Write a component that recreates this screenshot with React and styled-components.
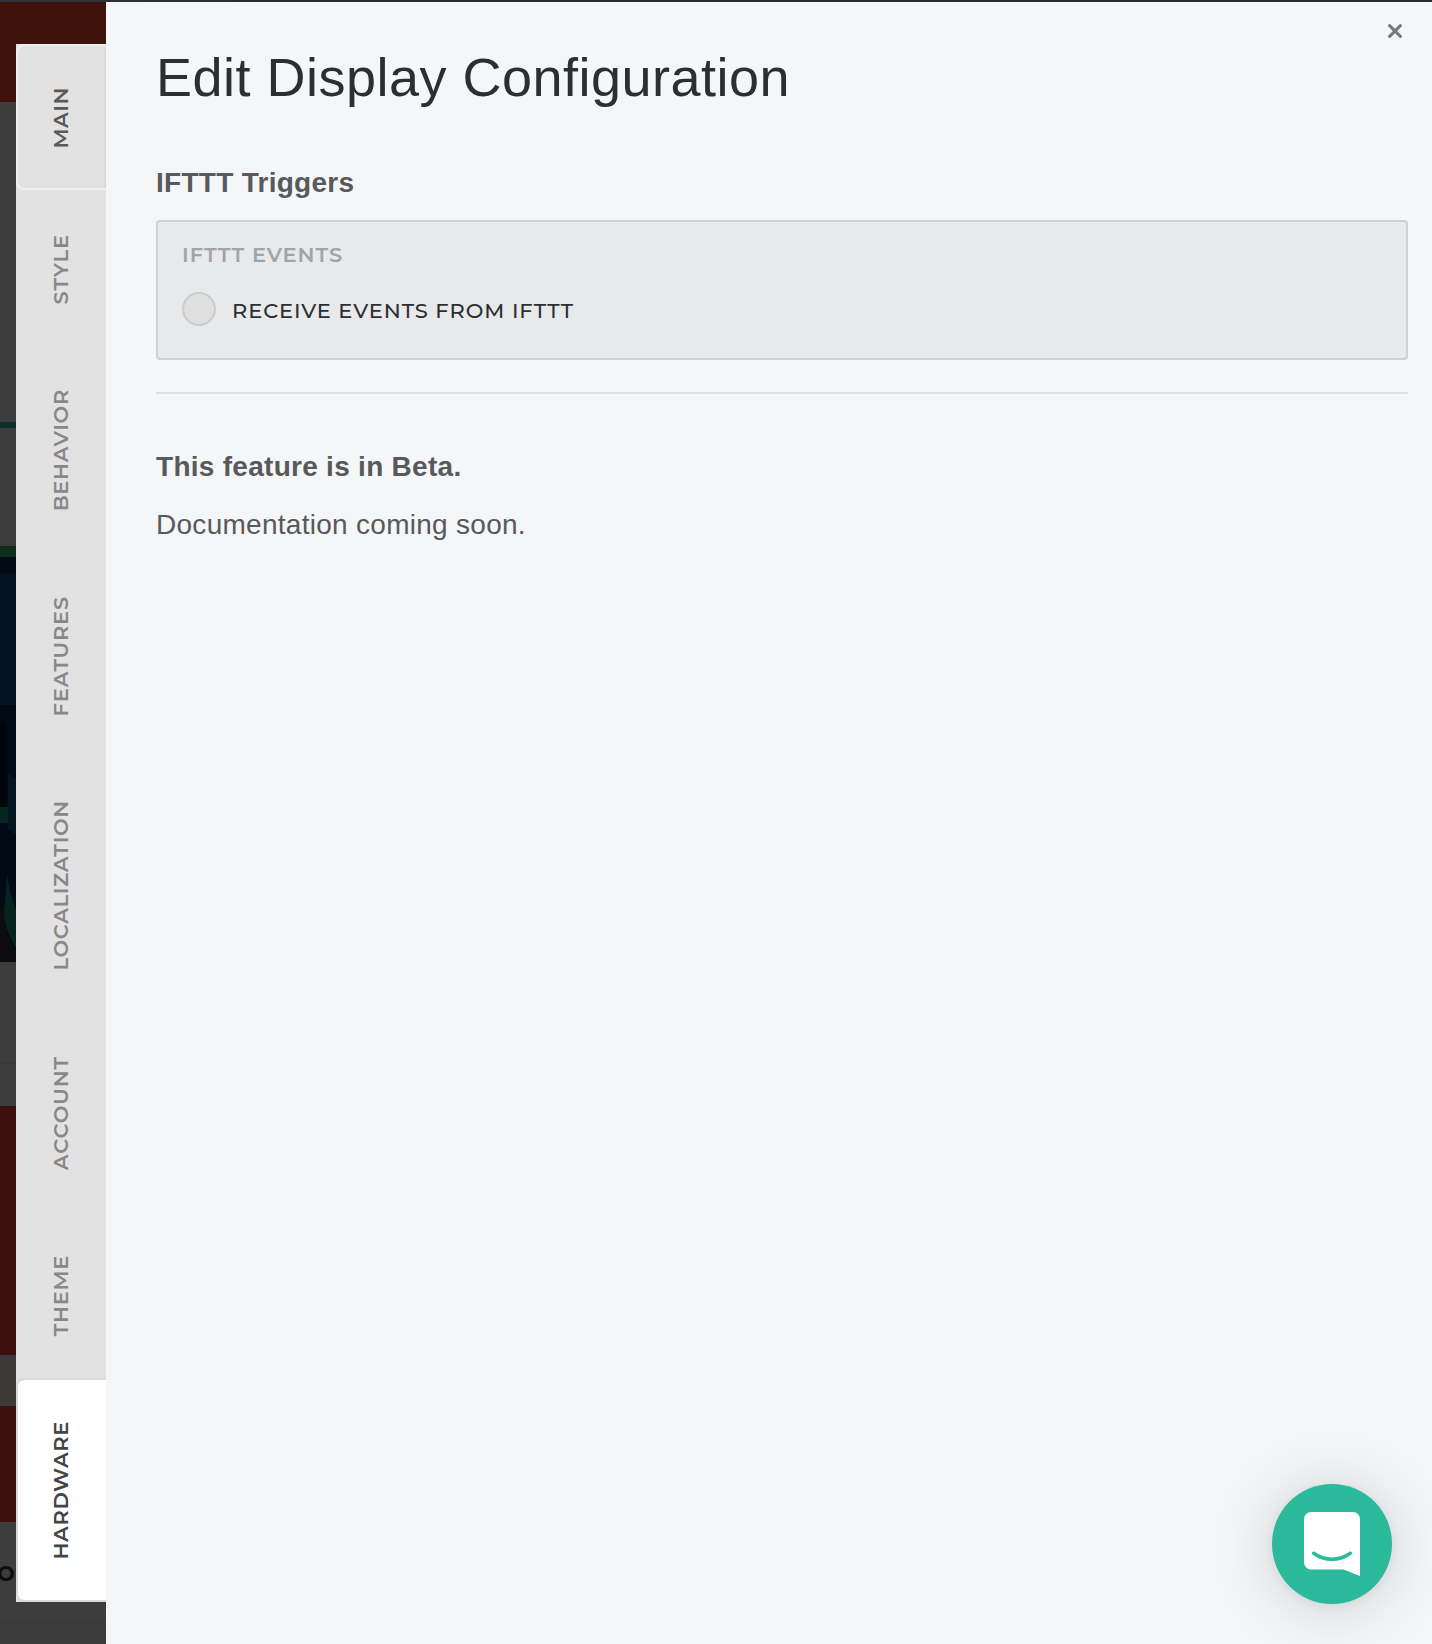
import React from 'react';
import styled, { createGlobalStyle } from 'styled-components';

const GlobalStyle = createGlobalStyle`
  *, *::before, *::after { box-sizing: border-box; }
  body { margin: 0; background: #3c3c3c; }
  h1, h2, p { margin: 0; }
  button { border: 0; padding: 0; background: none; cursor: pointer; }
`;

const body = '"Helvetica Neue", "Liberation Sans", Arial, sans-serif';
const caps = 'Montserrat, Lato, sans-serif';

const Screen = styled.div`
  position: relative;
  height: 1644px;
  overflow: hidden;
  font-family: ${body};
  color: #58595b;
`;

const Page = styled.div`
  display: flex;
  flex-direction: column;
  height: 100%;
`;

const Band = styled.div`
  flex: none;
  height: ${(p) => p.$h}px;
  background: ${(p) => p.$bg || '#3d3d3d'};
`;

const PageFooter = styled(Band)`
  padding-top: 39px;
  font: 700 21px/26px ${caps};
  color: #0e0e0e;
  text-indent: -3px;
`;

const Modal = styled.div`
  position: absolute;
  inset: 2px 0 0 16px;
  display: flex;
`;

const TabList = styled.nav`
  display: flex;
  flex-direction: column;
  align-self: flex-start;
  width: 90px;
  margin-top: 42px;
  background: #e2e2e2;
`;

const tones = {
  normal: { color: '#87888a', bg: 'transparent', line: 'transparent' },
  first: { color: '#58595b', bg: 'transparent', line: '#efefef' },
  active: { color: '#424447', bg: '#ffffff', line: '#dadada' },
};

const Tab = styled.button`
  display: flex;
  align-items: flex-end;
  justify-content: center;
  height: ${(p) => p.$h}px;
  padding: 0 3px 40px 0;
  border: 2px solid ${(p) => tones[p.$tone].line};
  border-right: 0;
  border-radius: 8px 0 0 8px;
  background: ${(p) => tones[p.$tone].bg};
  background-clip: padding-box;
  box-shadow: ${(p) => (p.$tone === 'first' ? 'inset -2px 0 2px -1px #d2d2d2' : 'none')};
  font: 600 21px/26px ${caps};
  letter-spacing: ${(p) => p.$track}px;
  color: ${(p) => tones[p.$tone].color};
`;

const TabLabel = styled.span`
  writing-mode: vertical-rl;
  transform: rotate(180deg);
  white-space: nowrap;
`;

const Panel = styled.main`
  flex: 1;
  display: flex;
  flex-direction: column;
  padding: 0 24px 0 50px;
  background: #f5f6f8;
`;

const CloseRow = styled.div`
  display: flex;
  justify-content: flex-end;
  height: 39px;
  padding: 22px 6px 0 0;
`;

const CloseButton = styled.button`
  width: 14px;
  height: 14px;
  line-height: 0;
`;

const Title = styled.h1`
  font-weight: 400;
  font-size: 54px;
  line-height: 72px;
  letter-spacing: 0.49px;
  color: #2d2e30;
`;

const SectionTitle = styled.h2`
  margin-top: ${(p) => p.$top}px;
  font-weight: 700;
  font-size: 28px;
  line-height: 40px;
  letter-spacing: 0.01em;
`;

const Text = styled.p`
  margin-top: 18px;
  font-size: 28px;
  line-height: 40px;
  letter-spacing: 0.01em;
`;

const Fieldset = styled.section`
  height: 140px;
  margin-top: 17px;
  padding: 20px 24px;
  border: 2px solid #cfd0d1;
  border-radius: 4px;
  background: #e8e9eb;
  font: 600 21px/26px ${caps};
  letter-spacing: 0.93px;
`;

const Legend = styled.div`
  color: #a2a3a5;
`;

const Option = styled.label`
  display: flex;
  align-items: center;
  height: 34px;
  margin-top: 24px;
  font-weight: 500;
  color: #2d2e30;
`;

const Radio = styled.span`
  width: 34px;
  height: 34px;
  margin-right: 16px;
  border: 2px solid #cbcccc;
  border-radius: 50%;
  background: #e0e0e0;
`;

const OptionText = styled.span`
  padding-top: 3px;
`;

const Divider = styled.hr`
  width: 100%;
  height: 2px;
  margin: 32px 0 0;
  border: 0;
  background: #dfe0e1;
`;

const ChatButton = styled.button`
  position: absolute;
  right: 40px;
  bottom: 40px;
  width: 120px;
  height: 120px;
  border-radius: 50%;
  background: #2bba9b;
  box-shadow: 0 2px 12px rgba(0, 0, 0, 0.06), 0 4px 64px rgba(0, 0, 0, 0.16);
  line-height: 0;
`;

const ArtworkSvg = styled.svg`
  display: block;
`;

const tabs = [
  { label: 'MAIN', h: 146, track: 0.5, tone: 'first' },
  { label: 'STYLE', h: 156, track: 0.95 },
  { label: 'BEHAVIOR', h: 207, track: 0.7 },
  { label: 'FEATURES', h: 205, track: 0.8 },
  { label: 'LOCALIZATION', h: 255, track: 0.65 },
  { label: 'ACCOUNT', h: 199, track: 0.85 },
  { label: 'THEME', h: 166, track: 0.7 },
  { label: 'HARDWARE', h: 224, track: 0.65, tone: 'active' },
];

const Artwork = () => (
  <ArtworkSvg width="106" height="405" viewBox="0 0 106 405">
    <rect width="106" height="405" fill="#020c17" />
    <rect y="17" width="106" height="131" fill="#04131f" />
    <rect y="148" width="106" height="257" fill="#020a16" />
    <path d="M0 164h7v86H0z" fill="#01060c" />
    <path d="M8 216l8 6v56l-8-6z" fill="#03151f" />
    <path d="M0 250h8v16H0z" fill="#07261f" />
    <path d="M7 316Q9 336 16 352V391Q0 365 5 345z" fill="#07231f" />
    <path d="M0 352h4q0 24 12 42v11H0z" fill="#0c0b0d" />
  </ArtworkSvg>
);

export default function App() {
  return (
    <Screen>
      <GlobalStyle />
      <Page>
        <Band $h={2} $bg="linear-gradient(90deg, #2c3539, #2b2a2c 20%)" />
        <Band $h={100} $bg="#3e120a" />
        <Band $h={320} />
        <Band $h={6} $bg="#0d3129" />
        <Band $h={118} />
        <Band $h={11} $bg="#102f1a" />
        <Band $h={405} $bg="#020a16"><Artwork /></Band>
        <Band $h={100} />
        <Band $h={2} $bg="#383838" />
        <Band $h={42} />
        <Band $h={249} $bg="#3d1010" />
        <Band $h={51} $bg="#3e3939" />
        <Band $h={116} $bg="#3d1010" />
        <PageFooter $h={100}>O</PageFooter>
        <Band $h={1} $bg="#383838" />
        <Band $h={21} $bg="#3b3b3b" />
      </Page>
      <Modal>
        <TabList>
          {tabs.map(({ label, h, track, tone = 'normal' }) => (
            <Tab key={label} $h={h} $track={track} $tone={tone}>
              <TabLabel>{label}</TabLabel>
            </Tab>
          ))}
        </TabList>
        <Panel>
          <CloseRow>
            <CloseButton aria-label="Close">
              <svg width="14" height="14" viewBox="0 0 14 14" fill="none" stroke="#77787a" strokeWidth="3" strokeLinecap="round">
                <path d="M1.600 1.600l10.800 10.800M12.400 1.600L1.600 12.400" />
              </svg>
            </CloseButton>
          </CloseRow>
          <Title>Edit Display Configuration</Title>
          <SectionTitle $top={50}>IFTTT Triggers</SectionTitle>
          <Fieldset>
            <Legend>IFTTT EVENTS</Legend>
            <Option>
              <Radio />
              <OptionText>RECEIVE EVENTS FROM IFTTT</OptionText>
            </Option>
          </Fieldset>
          <Divider />
          <SectionTitle $top={53}>This feature is in Beta.</SectionTitle>
          <Text>Documentation coming soon.</Text>
        </Panel>
      </Modal>
      <ChatButton aria-label="Open chat">
        <svg width="120" height="120" viewBox="0 0 120 120">
          <path d="M39 28h42a7 7 0 0 1 7 7v57L71.500 85.500H39a7 7 0 0 1-7-7V35a7 7 0 0 1 7-7z" fill="#fff" />
          <path d="M41.700 69.300c11 8 25.600 8 36.600 0" fill="none" stroke="#2bba9b" strokeWidth="3.600" strokeLinecap="round" />
        </svg>
      </ChatButton>
    </Screen>
  );
}
